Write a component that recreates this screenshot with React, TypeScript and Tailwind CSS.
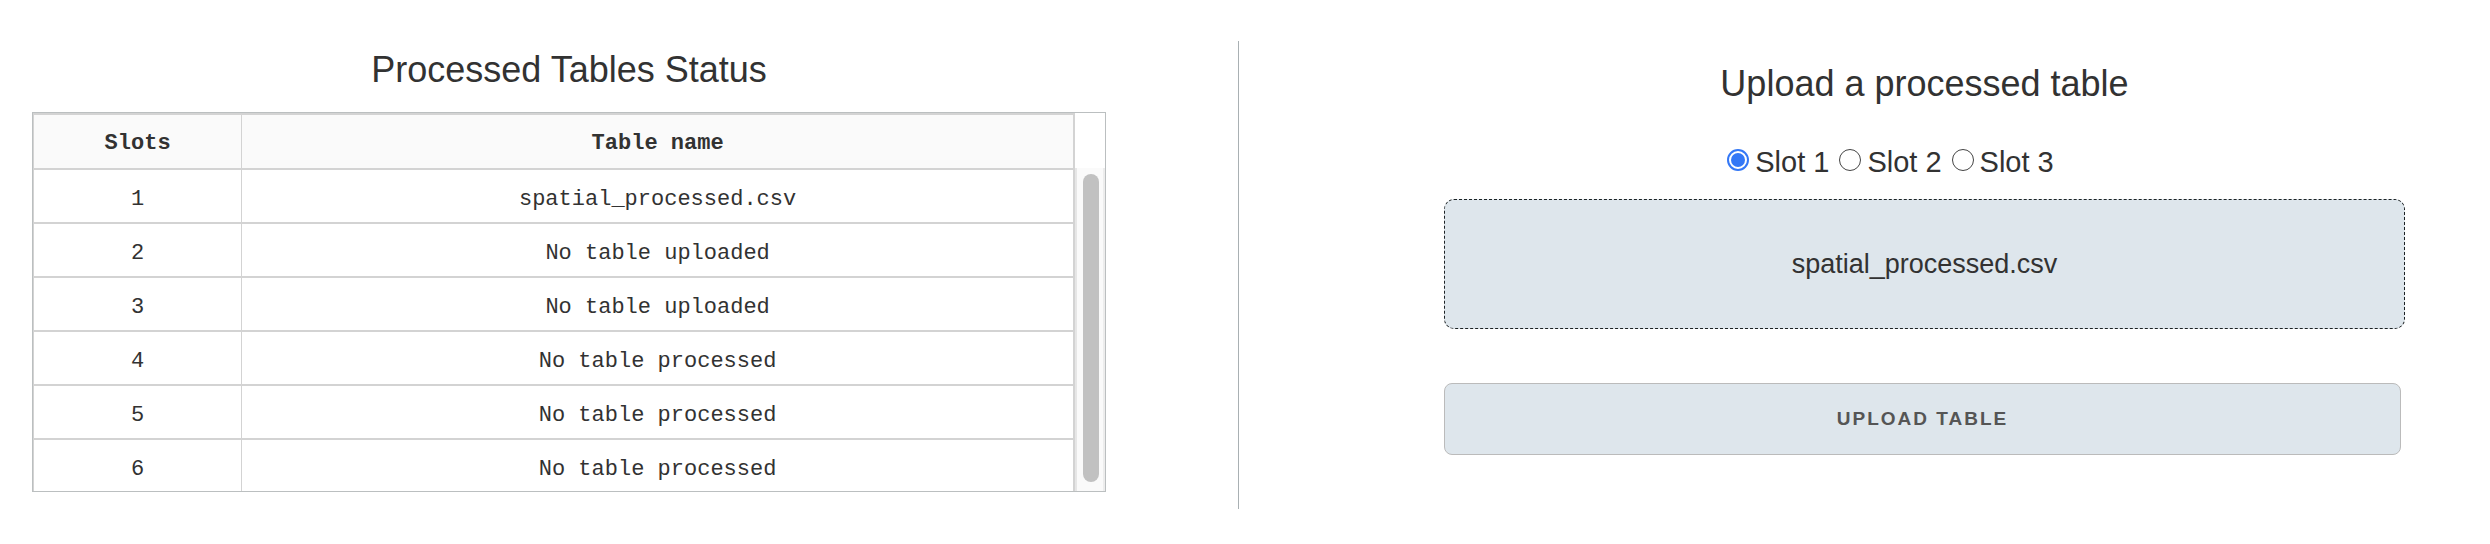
import { useState } from "react";

const rows = [
  "spatial_processed.csv",
  "No table uploaded",
  "No table uploaded",
  "No table processed",
  "No table processed",
  "No table processed",
];

function StatusTable() {
  return (
    <div className="flex border border-[#bbbfc0]">
      <table className="grow table-fixed border-separate border-spacing-0 border-l border-[#d3d3d3] text-center font-['Liberation_Mono','Courier_New',monospace] text-[22px] leading-7">
        <thead>
          <tr className="h-[57px] bg-[#fafafa]">
            <th scope="col" className="w-1/5 border-y-2 border-r border-[#d3d3d3] p-0 pt-1 font-bold">
              Slots
            </th>
            <th scope="col" className="border-y-2 border-r-2 border-[#d3d3d3] p-0 pt-1 font-bold">
              Table name
            </th>
          </tr>
        </thead>
        <tbody>
          {rows.map((name, i) => (
            <tr key={i} className="group h-[54px] last:h-[51px]">
              <td className="border-r border-b-2 border-[#d3d3d3] p-0 pt-2 group-last:border-b-0">{i + 1}</td>
              <td className="border-r-2 border-b-2 border-[#d3d3d3] p-0 pt-2 group-last:border-b-0">{name}</td>
            </tr>
          ))}
        </tbody>
      </table>
      <div className="flex w-[30px] shrink-0 flex-col pt-[55px]">
        <div className="flex grow border-x-2 border-l-[#e6e6e6] border-r-[#ededed] bg-[#fafafa] pt-1.5 pr-1 pb-[9px] pl-1.5">
          <div className="grow rounded-full bg-[#c1c1c1]" />
        </div>
      </div>
    </div>
  );
}

export default function App() {
  const [slot, setSlot] = useState(1);
  return (
    <main className="flex bg-white py-[41px] font-['Liberation_Sans',Arial,sans-serif] text-[#323232]">
      <section className="min-h-[468px] w-[1239px] shrink border-r border-[#a9b0b3] pt-[9px] pr-[132px] pb-[17px] pl-8">
        <h2 className="mb-[22px] text-center text-[36px] leading-10">Processed Tables Status</h2>
        <StatusTable />
      </section>
      <section className="flex-1 pt-[23px] pr-[85px] pl-[205px]">
        <h2 className="text-center text-[36px] leading-10">Upload a processed table</h2>
        <div className="mt-[38px] mb-[17px] flex justify-center gap-2.5 pr-[68px] text-[29px] leading-10" role="radiogroup" aria-label="Slot">
          {[1, 2, 3].map((n) => (
            <label key={n} className="flex items-center gap-1.5">
              <input
                type="radio"
                name="slot"
                checked={slot === n}
                onChange={() => setSlot(n)}
                className="mb-1 size-[22px] appearance-none rounded-full border border-[#444444] bg-white bg-clip-content p-[3px] checked:border-2 checked:border-[#3478f6] checked:bg-[#3478f6] checked:p-[2px]"
              />
              Slot {n}
            </label>
          ))}
        </div>
        <button
          type="button"
          className="flex h-[130px] w-full items-center justify-center rounded-[10px] border border-dashed border-[#1c2224] bg-[#dee6ec] text-[27px] leading-10"
        >
          spatial_processed.csv
        </button>
        <div className="mt-[54px] pr-1">
          <button
            type="button"
            className="h-[72px] w-full rounded-lg border border-[#bbbbbb] bg-[#dee6ec] text-[19px] font-bold tracking-[2px] text-[#555555] uppercase"
          >
            Upload table
          </button>
        </div>
      </section>
    </main>
  );
}
